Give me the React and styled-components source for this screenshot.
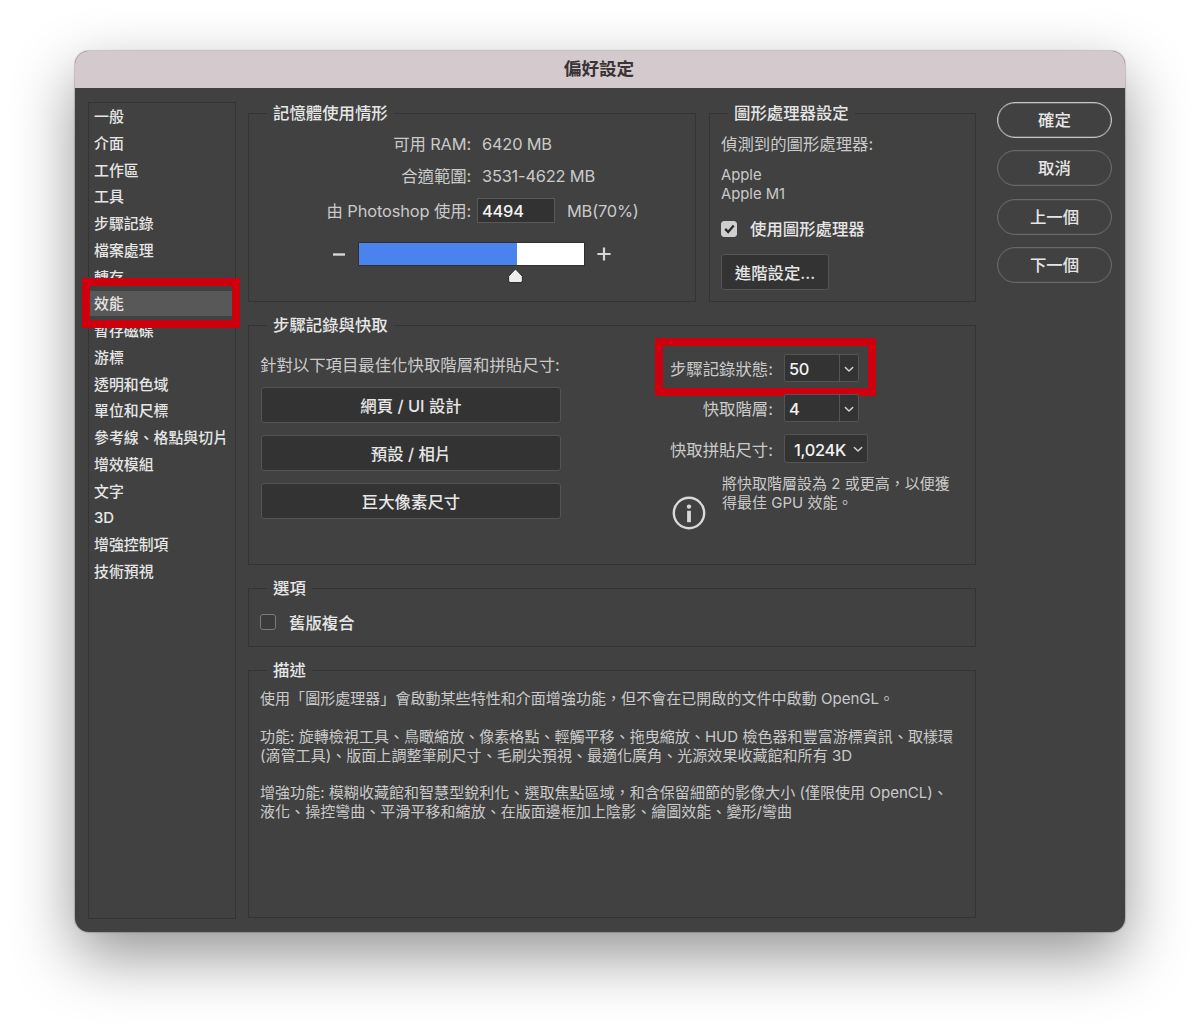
import React from "react";
import styled, { createGlobalStyle } from "styled-components";

const categories = [
  "一般",
  "介面",
  "工作區",
  "工具",
  "步驟記錄",
  "檔案處理",
  "轉存",
  "效能",
  "暫存磁碟",
  "游標",
  "透明和色域",
  "單位和尺標",
  "參考線、格點與切片",
  "增效模組",
  "文字",
  "3D",
  "增強控制項",
  "技術預視",
];

const memory = { used: 4494, percent: 70 };

const Chevron = () => (
  <svg width="10" height="7" viewBox="0 0 10 7" fill="none">
    <path
      d="M1.3 1.4 5 5 8.7 1.4"
      stroke="#d8d8d8"
      strokeWidth="1.4"
      strokeLinecap="round"
      strokeLinejoin="round"
    />
  </svg>
);

const App = () => {
  return (
    <>
      <GlobalStyle />
      <Desktop>
        <Window lang="zh-Hant">
          <TitleBar>偏好設定</TitleBar>
          <Body>
            <Sidebar>
              {categories.map((name) => (
                <Category key={name} $active={name === "效能"}>
                  <span>{name}</span>
                </Category>
              ))}
              <SidebarMark />
            </Sidebar>

            <Main>
              <TopRow>
                <Panel $width={448}>
                  <Legend>記憶體使用情形</Legend>
                  <MemoryRows>
                    <MemoryRow $height={32}>
                      <MemoryLabel>可用 RAM:</MemoryLabel>
                      <Value>6420 MB</Value>
                    </MemoryRow>
                    <MemoryRow $height={32}>
                      <MemoryLabel>合適範圍:</MemoryLabel>
                      <Value>3531-4622 MB</Value>
                    </MemoryRow>
                    <MemoryRow $height={38}>
                      <MemoryLabel>由 Photoshop 使用:</MemoryLabel>
                      <MemoryInput>{memory.used}</MemoryInput>
                      <Value>MB({memory.percent}%)</Value>
                    </MemoryRow>
                  </MemoryRows>
                  <SliderRow>
                    <svg width="13" height="13" viewBox="0 0 13 13">
                      <path d="M0 6.5h12" stroke="#d6d6d6" strokeWidth="2.4" />
                    </svg>
                    <Track>
                      <Fill style={{ width: `${memory.percent}%` }} />
                      <Thumb
                        style={{ left: `${memory.percent}%` }}
                        viewBox="0 0 17 16"
                      >
                        <path
                          d="M8.5 1 15.4 8.2V12.6Q15.4 14.6 13.4 14.6H3.6Q1.6 14.6 1.6 12.6V8.2Z"
                          fill="#ececec"
                          stroke="#262626"
                          strokeWidth="1"
                          strokeLinejoin="round"
                        />
                      </Thumb>
                    </Track>
                    <svg width="14" height="14" viewBox="0 0 14 14">
                      <path
                        d="M0.4 7h13.2M7 0.4v13.2"
                        stroke="#d6d6d6"
                        strokeWidth="2.2"
                      />
                    </svg>
                  </SliderRow>
                </Panel>

                <Panel $width={267}>
                  <Legend>圖形處理器設定</Legend>
                  <GpuContent>
                    <Label>偵測到的圖形處理器:</Label>
                    <GpuName>
                      Apple
                      <br />
                      Apple M1
                    </GpuName>
                    <CheckRow>
                      <CheckBox $checked>
                        <svg
                          width="11"
                          height="10"
                          viewBox="0 0 11 10"
                          fill="none"
                        >
                          <path
                            d="M1.2 4.9 4.2 8.1 9.7 1.6"
                            stroke="#2b2b2b"
                            strokeWidth="2.3"
                          />
                        </svg>
                      </CheckBox>
                      <CheckText>使用圖形處理器</CheckText>
                    </CheckRow>
                    <Button $width={108}>進階設定...</Button>
                  </GpuContent>
                </Panel>
              </TopRow>

              <Panel $height={240}>
                <Legend>步驟記錄與快取</Legend>
                <HistoryContent>
                  <PresetColumn>
                    <PresetLabel>
                      針對以下項目最佳化快取階層和拼貼尺寸:
                    </PresetLabel>
                    <PresetList>
                      <Button $width={300}>網頁 / UI 設計</Button>
                      <Button $width={300}>預設 / 相片</Button>
                      <Button $width={300}>巨大像素尺寸</Button>
                    </PresetList>
                  </PresetColumn>
                  <CacheColumn>
                    <CacheRow>
                      <CacheLabel>步驟記錄狀態:</CacheLabel>
                      <Combo>
                        <ComboValue>50</ComboValue>
                        <ComboArrow>
                          <Chevron />
                        </ComboArrow>
                      </Combo>
                      <HistoryMark />
                    </CacheRow>
                    <CacheRow>
                      <CacheLabel>快取階層:</CacheLabel>
                      <Combo>
                        <ComboValue>4</ComboValue>
                        <ComboArrow>
                          <Chevron />
                        </ComboArrow>
                      </Combo>
                    </CacheRow>
                    <CacheRow>
                      <CacheLabel>快取拼貼尺寸:</CacheLabel>
                      <Select>
                        1,024K
                        <Chevron />
                      </Select>
                    </CacheRow>
                    <Note>
                      <svg width="34" height="34" viewBox="0 0 34 34">
                        <circle
                          cx="17"
                          cy="17"
                          r="15.2"
                          fill="none"
                          stroke="#d9d9d9"
                          strokeWidth="2.4"
                        />
                        <circle cx="17" cy="10.6" r="2.2" fill="#d9d9d9" />
                        <path
                          d="M17 14.8v11.4"
                          stroke="#d9d9d9"
                          strokeWidth="3.8"
                        />
                      </svg>
                      <NoteText>
                        將快取階層設為 2 或更高，以便獲
                        <br />
                        得最佳 GPU 效能。
                      </NoteText>
                    </Note>
                  </CacheColumn>
                </HistoryContent>
              </Panel>

              <Panel $height={59}>
                <Legend>選項</Legend>
                <OptionContent>
                  <CheckBox />
                  <CheckText>舊版複合</CheckText>
                </OptionContent>
              </Panel>

              <Panel $height={248}>
                <Legend>描述</Legend>
                <Description>
                  <p>
                    使用「圖形處理器」會啟動某些特性和介面增強功能，但不會在已開啟的文件中啟動
                    OpenGL。
                  </p>
                  <p>
                    功能:
                    旋轉檢視工具、鳥瞰縮放、像素格點、輕觸平移、拖曳縮放、HUD
                    檢色器和豐富游標資訊、取樣環
                    <br />
                    (滴管工具)、版面上調整筆刷尺寸、毛刷尖預視、最適化廣角、光源效果收藏館和所有
                    3D
                  </p>
                  <p>
                    增強功能:
                    模糊收藏館和智慧型銳利化、選取焦點區域，和含保留細節的影像大小
                    (僅限使用 OpenCL)、
                    <br />
                    液化、操控彎曲、平滑平移和縮放、在版面邊框加上陰影、繪圖效能、變形/彎曲
                  </p>
                </Description>
              </Panel>
            </Main>

            <Actions>
              <PillButton $primary>確定</PillButton>
              <PillButton>取消</PillButton>
              <PillButton>上一個</PillButton>
              <PillButton>下一個</PillButton>
            </Actions>
          </Body>
        </Window>
      </Desktop>
    </>
  );
};

export default App;

const GlobalStyle = createGlobalStyle`
  * {
    box-sizing: border-box;
  }
  body {
    margin: 0;
    background: #fff;
    font-family: Inter, "Noto Sans CJK TC", sans-serif;
  }
  p {
    margin: 0;
  }
`;

const Desktop = styled.div`
  height: 1031px;
  padding: 51px 0 0 75px;
  overflow: hidden;
`;

const Window = styled.div`
  width: 1050px;
  height: 881px;
  border-radius: 14px;
  background: #414141;
  color: #e6e6e6;
  font-size: 16.4px;
  white-space: nowrap;
  box-shadow: 0 0 1px 1px rgba(0, 0, 0, 0.18), 0 24px 62px rgba(0, 0, 0, 0.42);
`;

const TitleBar = styled.header`
  height: 37px;
  padding-right: 2px;
  border-radius: 14px 14px 0 0;
  background: #d4cacd;
  color: #3a3436;
  font-size: 17.6px;
  font-weight: 700;
  line-height: 36px;
  text-align: center;
`;

const Body = styled.div`
  display: flex;
  padding: 14px 13px;
`;

const Sidebar = styled.nav`
  position: relative;
  width: 148px;
  height: 817px;
  padding-top: 1px;
  border: 1px solid #343434;
`;

const Category = styled.div`
  height: 26.75px;
  padding-left: 5px;
  font-size: 14.9px;
  font-weight: 500;
  line-height: 26.75px;

  ${(props) => props.$active && "background: linear-gradient(#585858 25px, transparent 25px);"}
`;

const Mark = styled.div`
  position: absolute;
  border: 8px solid #cf000d;
`;

const SidebarMark = styled(Mark)`
  top: 175px;
  left: -7px;
  width: 158px;
  height: 50px;
`;

const Main = styled.main`
  width: 728px;
  margin: 11px 0 0 12px;
  display: flex;
  flex-direction: column;
  gap: 23px;
`;

const TopRow = styled.div`
  display: flex;
  justify-content: space-between;
  height: 189px;
`;

const Panel = styled.section`
  width: ${(props) => (props.$width ? `${props.$width}px` : "100%")};
  height: ${(props) => (props.$height ? `${props.$height}px` : "100%")};
  border: 1px solid #343434;
`;

/* sits on the top border of its panel and takes no height itself */
const Legend = styled.h2`
  width: fit-content;
  height: 22px;
  margin: -12px 0 -10px 18px;
  padding: 0 6px;
  background: #414141;
  font-size: 16.4px;
  font-weight: 500;
  line-height: 22px;
`;

const Label = styled.span`
  color: #cacaca;
`;

const Value = styled.span`
  padding-top: 2px;
  color: #cacaca;
  letter-spacing: -0.2px;
`;

const MemoryRows = styled.div`
  padding-top: 13px;
`;

const MemoryRow = styled.div`
  display: flex;
  align-items: center;
  height: ${(props) => props.$height}px;
`;

const MemoryLabel = styled(Label)`
  width: 222px;
  margin-right: 11px;
  letter-spacing: -0.13px;
  text-align: right;
`;

const MemoryInput = styled.div`
  width: 78px;
  height: 25px;
  margin: 0 12px 0 -5px;
  padding-left: 4px;
  border: 1px solid #595959;
  background: #323232;
  color: #f2f2f2;
  font-weight: 500;
  letter-spacing: -0.2px;
  line-height: 24px;
`;

const SliderRow = styled.div`
  display: flex;
  align-items: center;
  gap: 13px;
  height: 24px;
  margin: 13px 0 0 84px;
`;

const Track = styled.div`
  position: relative;
  width: 225px;
  height: 22px;
  background: #fff;
  box-shadow: 0 0 0 1px #303030;
`;

const Fill = styled.div`
  height: 100%;
  background: #4b83ee;
`;

const Thumb = styled.svg`
  position: absolute;
  top: 25px;
  width: 17px;
  height: 16px;
  margin-left: -10px;
`;

const GpuContent = styled.div`
  padding: 20px 0 0 11px;
  line-height: 20px;
`;

const GpuName = styled.div`
  margin-top: 12px;
  color: #cacaca;
  font-size: 14.8px;
  line-height: 19px;
`;

const CheckRow = styled.div`
  display: flex;
  align-items: center;
  height: 20px;
  margin: 15px 0 15px;
`;

const CheckBox = styled.span`
  display: flex;
  align-items: center;
  justify-content: center;
  width: 16px;
  height: 16px;
  border: 1px solid ${(props) => (props.$checked ? "#cfcfcf" : "#7b7b7b")};
  border-radius: 3px;
  background: ${(props) => (props.$checked ? "#cfcfcf" : "#3b3b3b")};
`;

const CheckText = styled.span`
  margin-left: 13px;
  font-weight: 500;
`;

const Button = styled.div`
  width: ${(props) => props.$width}px;
  height: 36px;
  border: 1px solid #545454;
  border-radius: 3px;
  background: #333;
  font-weight: 500;
  line-height: 36px;
  text-align: center;
`;

const HistoryContent = styled.div`
  display: flex;
  padding-left: 11px;
`;

const PresetColumn = styled.div`
  width: 301px;
  padding-top: 29px;
`;

const PresetLabel = styled(Label)`
  display: block;
  height: 20px;
  line-height: 20px;
`;

const PresetList = styled.div`
  display: flex;
  flex-direction: column;
  gap: 12.2px;
  padding: 12px 0 0 1px;
`;

const CacheColumn = styled.div`
  margin-left: 94px;
  padding-top: 22px;
`;

const CacheRow = styled.div`
  position: relative;
  display: flex;
  align-items: center;
  height: 40.3px;
`;

const CacheLabel = styled(Label)`
  width: 118px;
  margin-right: 11px;
  text-align: right;
`;

const Combo = styled.div`
  display: flex;
  width: 75px;
  height: 28px;
  border: 1px solid #545454;
  border-radius: 2px;
  background: #333;
`;

const ComboValue = styled.span`
  width: 55px;
  padding-left: 4px;
  border-right: 1px solid #545454;
  color: #f2f2f2;
  font-weight: 500;
  letter-spacing: -0.3px;
  line-height: 28px;
`;

const ComboArrow = styled.span`
  flex: 1;
  display: flex;
  align-items: center;
  justify-content: center;
  padding-top: 3px;
`;

const Select = styled.div`
  display: flex;
  align-items: center;
  justify-content: space-between;
  width: 84px;
  height: 29px;
  padding: 2px 4px 0 9px;
  border: 1px solid #545454;
  border-radius: 3px;
  background: #333;
  color: #f2f2f2;
  font-weight: 500;
  letter-spacing: -0.3px;
`;

const HistoryMark = styled(Mark)`
  top: -10px;
  left: 0;
  width: 221px;
  height: 58px;
`;

const Note = styled.div`
  display: flex;
  margin: 5px 0 0 17px;

  svg {
    margin-top: 22px;
  }
`;

const NoteText = styled.p`
  margin-left: 16px;
  color: #cacaca;
  font-size: 15.03px;
  line-height: 19px;
`;

const OptionContent = styled.div`
  display: flex;
  align-items: center;
  height: 22px;
  padding-left: 11px;
  margin-top: 22px;
`;

const Description = styled.div`
  display: flex;
  flex-direction: column;
  gap: 18.5px;
  padding: 18px 0 0 11px;
  color: #cacaca;
  font-size: 15.03px;
  letter-spacing: 0.03px;
  line-height: 19px;
`;

const Actions = styled.aside`
  display: flex;
  flex-direction: column;
  gap: 12.3px;
  margin-left: 21px;
`;

/* the ring is a border plus a faint inner line, so it reads as 1.5px */
const PillButton = styled.div`
  width: 115px;
  height: 36px;
  border: 1px solid ${(props) => (props.$primary ? "#c8c8c8" : "#6a6a6a")};
  border-radius: 18px;
  box-shadow: inset 0 0 0 0.5px ${(props) => (props.$primary ? "#8c8c8c" : "#525252")};
  font-weight: 500;
  line-height: 35px;
  text-align: center;
`;
